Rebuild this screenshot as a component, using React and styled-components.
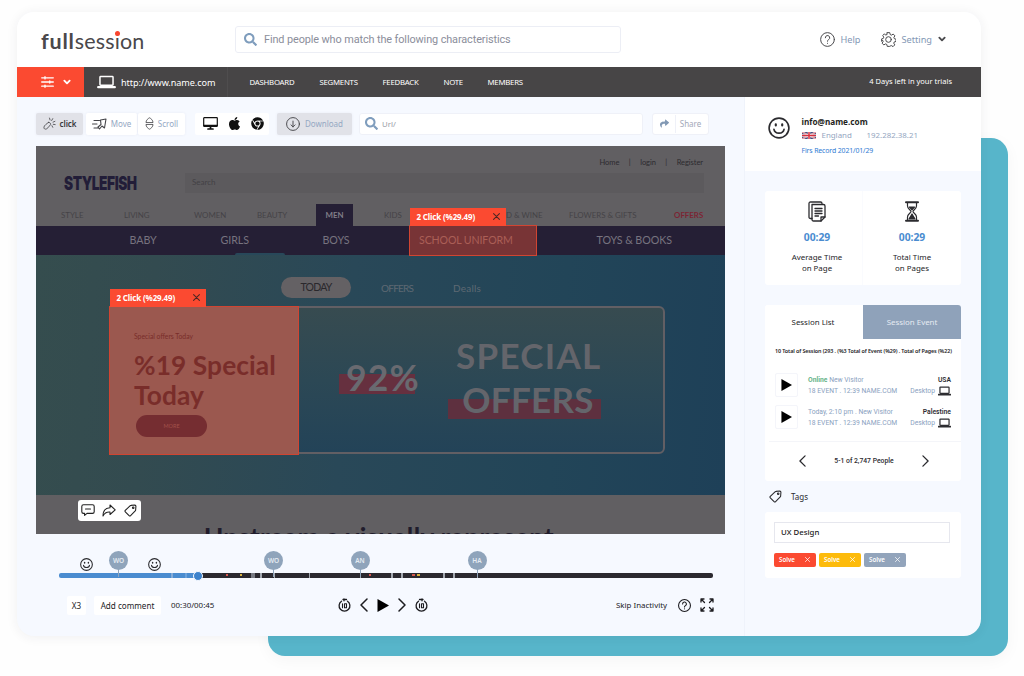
import React from 'react';
import styled, { createGlobalStyle, css } from 'styled-components';
import { FaApple, FaChrome, FaSearch, FaShare } from 'react-icons/fa';

const GlobalStyle = createGlobalStyle`
  * {
    box-sizing: border-box;
  }
  body {
    margin: 0;
    background-color: #fefefe;
    font-family: 'Noto Sans', 'Open Sans', sans-serif;
    color: #2b2b2f;
    overflow: hidden;
  }
  svg {
    display: block;
    flex: none;
  }
`;

const Page = styled.div`
  position: relative;
  width: 1024px;
  height: 676px;
  padding: 12px 0 0 17px;
`;

const Backdrop = styled.div`
  position: absolute;
  left: 268px;
  top: 138px;
  width: 740px;
  height: 518px;
  border-radius: 17px;
  background-color: #57b5ca;
  box-shadow: 0 4px 16px rgba(0, 0, 0, 0.04);
`;

const Window = styled.div`
  position: relative;
  width: 964px;
  height: 624px;
  border-radius: 17px;
  overflow: hidden;
  background-color: #f6f9ff;
  display: flex;
  flex-direction: column;
  box-shadow: 0 1px 12px rgba(40, 40, 60, 0.07);
`;

/* Header */

const Header = styled.header`
  height: 54.5px;
  flex: none;
  display: flex;
  align-items: center;
  background-color: #fff;
  padding: 0 35px 0 24px;
`;

const Logo = styled.div`
  width: 194px;
  height: 30px;
  line-height: 30px;
  padding-top: 2px;
  font-family: Lato, sans-serif;
  font-size: 21.5px;
  font-weight: 400;
  letter-spacing: 0.15px;
  color: #4a484b;
  white-space: nowrap;

  b {
    font-weight: 700;
    letter-spacing: 0.8px;
  }
`;

const LogoI = styled.span`
  position: relative;

  &::after {
    content: '';
    position: absolute;
    left: 0;
    top: 3px;
    width: 5px;
    height: 5px;
    border-radius: 50%;
    background-color: #f9452f;
  }
`;

const PeopleSearch = styled.div`
  width: 386px;
  height: 27px;
  display: flex;
  align-items: center;
  gap: 7px;
  padding-left: 8px;
  border: 1px solid #eceef5;
  border-radius: 3px;
  font-family: Roboto, sans-serif;
  font-size: 10.9px;
  letter-spacing: -0.11px;
  color: #8b8e9b;
  white-space: nowrap;

  svg {
    color: #7f9dbd;
  }
`;

const HeaderActions = styled.div`
  margin-left: auto;
  display: flex;
  align-items: center;
  font-size: 9.2px;
  color: #8398b5;

  svg {
    color: #4a4a4d;
  }
`;

const HeaderLink = styled.span`
  padding-left: 5px;
  padding-right: ${(props) => props.$end || 0}px;
`;

/* Dark bar */

const NavBar = styled.nav`
  height: 30.5px;
  flex: none;
  display: flex;
  align-items: center;
  background-color: #474546;
  color: #fff;
  white-space: nowrap;
`;

const FilterButton = styled.button`
  width: 67px;
  height: 100%;
  border: none;
  padding: 0 0 0 11px;
  display: flex;
  align-items: center;
  justify-content: center;
  gap: 9px;
  background-color: #fb4a31;
  color: #fff;
`;

const SiteUrl = styled.div`
  width: 144px;
  height: 100%;
  display: flex;
  align-items: center;
  gap: 5px;
  padding-left: 13px;
  border-right: 1px solid #4f4d4e;
  font-size: 9.1px;
  letter-spacing: -0.07px;

  span {
    padding-top: 1px;
  }
`;

const NavLinks = styled.div`
  display: grid;
  grid-template-columns: 70px 63px 61px 44px auto;
  padding-left: 21.5px;
  font-size: 7.8px;
  letter-spacing: -0.25px;
`;

const Trial = styled.span`
  margin-left: auto;
  padding-right: 29px;
  padding-bottom: 1px;
  font-size: 7.5px;
`;

const Body = styled.div`
  flex: 1;
  display: flex;
`;

const Main = styled.main`
  width: 727px;
  padding: 15.5px 19px 0;
  display: flex;
  flex-direction: column;
`;

/* Toolbar */

const Toolbar = styled.div`
  height: 22px;
  display: flex;
`;

const Tool = styled.button`
  width: ${(props) => props.$w}px;
  height: 22px;
  margin-right: ${(props) => props.$gap || 0}px;
  border: none;
  border-radius: 2px;
  padding: 0;
  display: flex;
  align-items: center;
  justify-content: center;
  gap: ${(props) => props.$space || 4}px;
  background-color: ${(props) => (props.$active ? '#e1e2e8' : '#fff')};
  color: ${(props) => (props.$strong ? '#38383c' : '#95a8c3')};
  font-family: 'Noto Sans', sans-serif;
  font-size: 8px;
  font-weight: ${(props) => (props.$strong ? 600 : 400)};
  letter-spacing: ${(props) => (props.$strong ? -0.1 : 0)}px;
  box-shadow: 0 0 3px rgba(60, 70, 110, 0.07);

  svg {
    color: #444448;
  }
`;

const Devices = styled.div`
  width: 74px;
  height: 22px;
  margin-right: 8px;
  padding: 0 5px 0 8px;
  display: flex;
  align-items: center;
  justify-content: space-between;
  border-radius: 2px;
  background-color: #fff;
  color: #111;
`;

const UrlSearch = styled.div`
  width: 284px;
  height: 22px;
  margin-right: 9px;
  padding-left: 5px;
  display: flex;
  align-items: center;
  gap: 4px;
  border: 1px solid #eff1f8;
  border-radius: 3px;
  background-color: #fff;
  font-size: 7.8px;
  color: #9a9ca6;

  svg {
    color: #7f9dbd;
  }
`;

const ShareGroup = styled.div`
  width: 57px;
  height: 22px;
  display: grid;
  grid-template-columns: 22px 1fr;
  align-items: center;
  justify-items: center;
  border: 1px solid #eff1f8;
  border-radius: 3px;
  background-color: #fff;
  font-size: 8px;
  color: #a3a8b8;

  svg {
    color: #8299b4;
  }

  span {
    width: 100%;
    line-height: 18px;
    padding-right: 3px;
    text-align: center;
    border-left: 1px solid #eff1f8;
  }
`;

/* Recorded page */

const Preview = styled.section`
  position: relative;
  height: 388.5px;
  margin-top: 11px;
  width: 689px;
  overflow: hidden;
  background-color: #615f62;
  font-family: Lato, sans-serif;
  white-space: nowrap;
`;

const ShopTop = styled.div`
  height: 27px;
  padding: 9px 22px 0 0;
  display: flex;
  justify-content: flex-end;
  gap: 9.5px;
  font-size: 7.5px;
  letter-spacing: -0.05px;
  line-height: 15px;
  color: #2c2a2f;
`;

const ShopBrandRow = styled.div`
  height: 31px;
  display: flex;
  align-items: flex-start;
  padding-left: 28px;
`;

const ShopBrand = styled.div`
  width: 121px;
  height: 22px;
  line-height: 21px;
  font-family: Inter, sans-serif;
  font-size: 19px;
  font-weight: 900;
  letter-spacing: -0.6px;
  color: #221d38;
  transform: scaleX(0.72);
  transform-origin: 0 0;
`;

const ShopSearch = styled.div`
  width: 519px;
  height: 20px;
  padding-left: 7px;
  line-height: 19px;
  font-size: 8px;
  background-color: #5c5a5d;
  color: #434145;
`;

const ShopCategories = styled.div`
  height: 22.5px;
  display: grid;
  grid-template-columns: 63px 70px 63px 59px 68px 105px 80px 105px auto;
  padding-left: 25px;
  font-size: 7.9px;
  line-height: 23px;
  color: #454347;
`;

const Category = styled.span`
  ${(props) =>
    props.$active &&
    css`
      width: 37px;
      text-align: center;
      background-color: #251f35;
      color: #817e88;
      font-weight: 700;
    `}
  ${(props) =>
    props.$sale &&
    css`
      color: #7c2534;
      font-weight: 700;
    `}
`;

const SubNav = styled.div`
  height: 29px;
  display: grid;
  grid-template-columns: 91px 102px 97px 177px auto;
  padding-left: 93.5px;
  font-size: 10.7px;
  letter-spacing: -0.08px;
  line-height: 28px;
  background-color: #251f35;
  color: #77737f;
`;

const SubNavItem = styled.span`
  position: relative;

  ${(props) =>
    props.$open &&
    css`
      &::after {
        content: '';
        position: absolute;
        left: 14px;
        bottom: 0;
        width: 50px;
        height: 2px;
        border-radius: 2px 2px 0 0;
        background-color: #28485a;
      }
    `}
`;

const Hero = styled.div`
  height: 240px;
  padding: 21.5px 60px 0 73px;
  background: linear-gradient(95deg, #354d4e 0%, #334b50 17%, #294858 45%, #224558 75%, #1e4058 100%);
`;

const HeroTabs = styled.div`
  height: 22px;
  display: grid;
  grid-template-columns: 70px 30px 72px auto;
  align-items: center;
  padding-left: 172px;
  font-size: 10px;
  line-height: 20px;
  color: #5e6973;
`;

const HeroTab = styled.span`
  grid-column: ${(props) => props.$col};
  letter-spacing: ${(props) => (props.$tight ? -0.75 : 0.2)}px;
  ${(props) =>
    props.$active &&
    css`
      height: 21px;
      border-radius: 11px;
      text-align: center;
      background-color: #646164;
      color: #2a282c;
      font-size: 10.5px;
    `}
`;

const Promo = styled.div`
  height: 148px;
  margin-top: 7.5px;
  display: flex;
  border: 2px solid #625f64;
  border-radius: 6px;
  background: linear-gradient(#374b50, #2c4855 50%, #234358);
`;

const PromoCard = styled.div`
  width: 188px;
`;

const PromoSpace = styled.div`
  display: flex;
  flex-direction: column;
  align-items: center;
  padding: 26px 0 0 33px;
`;

const Percent = styled.div`
  position: relative;
  width: 76px;
  height: 40px;
  margin: 48px 0 0 40px;
  padding-left: 7px;
  line-height: 43px;
  font-size: 35.5px;
  font-weight: 700;
  letter-spacing: 1.1px;
  color: #696a70;
  background: linear-gradient(#66303f, #66303f) 0 18px / 76px 20px no-repeat;
`;

const OfferLine = styled.div`
  width: 153px;
  height: 43px;
  padding-left: 8px;
  line-height: 43px;
  text-align: center;
  font-family: Lato, sans-serif;
  font-size: 35px;
  font-weight: 700;
  letter-spacing: 1.3px;
  color: #64656b;
  ${(props) =>
    props.$marked &&
    css`
      height: 46px;
      padding-left: 7px;
      line-height: 45px;
      letter-spacing: 0.3px;
      background: linear-gradient(#5e303f, #5e303f) 0 21.5px / 100% 20px no-repeat;
    `}
`;

const Footer = styled.div`
  height: 39px;
  padding: 26px 0 0 168px;
  font-size: 26px;
  line-height: 32px;
  font-weight: 700;
  letter-spacing: 0.32px;
  color: #201c2c;
`;

const Highlight = styled.div`
  position: absolute;
  left: ${(props) => props.$x}px;
  top: ${(props) => props.$y}px;
  width: ${(props) => props.$w}px;
  height: ${(props) => props.$h}px;
  border: 1px solid #d04532;
  background-color: ${(props) => props.$fill};
`;

const ClickTag = styled.div`
  position: absolute;
  left: ${(props) => props.$x}px;
  top: ${(props) => props.$y}px;
  width: 96.5px;
  height: 18px;
  padding: 0 6px 1px 7px;
  display: flex;
  align-items: center;
  justify-content: space-between;
  background-color: #fb4a31;
  color: #fff;
  font-family: 'Noto Sans', sans-serif;
  font-size: 8px;
  font-weight: 700;
  letter-spacing: -0.15px;

  svg {
    color: #4b2724;
  }
`;

const HighlightText = styled.div`
  padding: 23px 0 0 24px;
  color: #792d2a;
`;

const SmallOffer = styled.div`
  height: 13px;
  line-height: 13px;
  font-size: 6.8px;
`;

const BigOffer = styled.div`
  margin-top: 7px;
  font-family: Lato, sans-serif;
  font-size: 26.3px;
  line-height: 30.5px;
  font-weight: 700;
  letter-spacing: 0.1px;
`;

const MoreButton = styled.div`
  width: 71px;
  height: 22px;
  margin: 4.5px 0 0 2px;
  border-radius: 11px;
  text-align: center;
  line-height: 22px;
  font-size: 5.5px;
  background-color: #752d31;
  color: #a2514a;
`;

const SchoolText = styled.div`
  padding-left: 9px;
  line-height: 28px;
  font-size: 10.6px;
  letter-spacing: -0.12px;
  color: #ab5f56;
`;

const FloatTools = styled.div`
  position: absolute;
  left: 41.5px;
  top: 354px;
  width: 63px;
  height: 21px;
  border-radius: 3px;
  background-color: #fff;
  color: #222;
  display: grid;
  grid-template-columns: repeat(3, 1fr);
  align-items: center;
  justify-items: center;
`;

/* Timeline */

const Timeline = styled.div`
  position: relative;
  width: 654px;
  height: 5px;
  margin: 39px 0 0 23px;
  border-radius: 2px;
  background: linear-gradient(90deg, #4a8cd0 139px, #2b292f 139px);
  flex: none;
`;

const Knob = styled.div`
  position: absolute;
  left: 134px;
  top: -2.5px;
  width: 10px;
  height: 10px;
  border-radius: 50%;
  border: 1px solid #f6f9ff;
  background-color: #3c82cc;
`;

const Tick = styled.i`
  position: absolute;
  left: ${(props) => props.$x}px;
  top: ${(props) => (props.$dot ? 1 : 0)}px;
  width: ${(props) => props.$w || 1.5}px;
  height: ${(props) => (props.$dot ? 2 : 5)}px;
  background-color: ${(props) => props.$color || '#a3a8b0'};
`;

const Visitor = styled.div`
  position: absolute;
  left: ${(props) => props.$x}px;
  top: -22px;
  width: 19px;
  height: 19px;
  border-radius: 50%;
  background-color: #8fa4bb;
  color: #e5ebf2;
  font-size: 6.5px;
  font-weight: 600;
  line-height: 19px;
  text-align: center;

  &::after {
    content: '';
    position: absolute;
    left: 9px;
    top: 18px;
    width: 1px;
    height: 8px;
    background-color: #8fa4bb;
  }
`;

const Mood = styled.div`
  position: absolute;
  left: ${(props) => props.$x}px;
  top: -15.5px;
`;

const Controls = styled.div`
  height: 20px;
  margin-top: 17px;
  padding-left: 31px;
  display: grid;
  grid-template-columns: 27px 77px 167px 22px 17px 21px 17px 201px 61.5px 22px auto;
  align-items: center;
  font-size: 7.9px;
  color: #222226;
  white-space: nowrap;

  svg {
    color: #1c1c20;
  }
`;

const SmallButton = styled.button`
  width: ${(props) => props.$w}px;
  height: 19px;
  border: none;
  padding: 0;
  border-radius: 2px;
  background-color: #fff;
  font: inherit;
  font-size: 8.1px;
  color: inherit;
`;

/* Sidebar */

const Sidebar = styled.aside`
  width: 237px;
  border-left: 1px solid #eff3fb;
`;

const Profile = styled.div`
  height: 74px;
  padding: 19px 0 0 23px;
  display: flex;
  gap: 11.5px;
  background-color: #fff;

  > svg {
    margin-top: 1px;
  }
`;

const ProfileInfo = styled.div`
  font-size: 7.9px;
  white-space: nowrap;
`;

const Email = styled.div`
  height: 12px;
  line-height: 11px;
  font-size: 8.2px;
  font-weight: 700;
  color: #1f1f22;
`;

const Place = styled.div`
  height: 15px;
  line-height: 15px;
  display: grid;
  grid-template-columns: 20px 45px auto;
  align-items: center;
  color: #94a6bf;
`;

const Record = styled.div`
  height: 15px;
  line-height: 15px;
  font-size: 6.9px;
  letter-spacing: -0.12px;
  color: #2f7bd3;
`;

const Card = styled.div`
  width: 196px;
  height: ${(props) => props.$h}px;
  margin: ${(props) => props.$top}px 0 0 20px;
  border-radius: 3px;
  background-color: #fff;
  overflow: hidden;
`;

const Stats = styled(Card)`
  display: grid;
  grid-template-columns: 98px 98px;
`;

const Stat = styled.div`
  display: flex;
  flex-direction: column;
  align-items: center;
  padding-top: 9.5px;
  padding-left: ${(props) => (props.$first ? 7 : 0)}px;
  border-right: ${(props) => (props.$first ? '1px solid #fafbfe' : 'none')};
`;

const StatTime = styled.div`
  margin-top: 9.5px;
  line-height: 13px;
  font-size: 10.3px;
  font-weight: 700;
  color: #4a8cd0;
`;

const StatLabel = styled.div`
  margin-top: 7.5px;
  text-align: center;
  font-size: 7.9px;
  line-height: 11.5px;
  color: #252528;
`;

const Tabs = styled.div`
  display: grid;
  grid-template-columns: 98px 98px;
  height: 33px;
`;

const Tab = styled.div`
  line-height: 34px;
  text-align: center;
  padding-right: ${(props) => (props.$inactive ? 0 : 2)}px;
  font-size: 7.9px;
  color: ${(props) => (props.$inactive ? '#e6ebf2' : '#252528')};
  background-color: ${(props) => (props.$inactive ? '#8fa2ba' : '#fff')};
`;

const Summary = styled.div`
  height: 26px;
  padding-left: 10px;
  line-height: 26px;
  font-size: 5.4px;
  font-weight: 600;
  letter-spacing: -0.1px;
  color: #232326;
  white-space: nowrap;
`;

const Session = styled.div`
  height: 32px;
  padding: 0 10px;
  display: grid;
  grid-template-columns: 33px 1fr auto;
  font-family: Roboto, sans-serif;
  font-size: 6.75px;
  line-height: 11px;
  color: #8aa1c0;
  white-space: nowrap;
`;

const PlayBox = styled.div`
  width: 23px;
  height: 24px;
  margin-top: 9px;
  display: flex;
  align-items: center;
  justify-content: center;
  border: 1px solid #f4f5fa;
  border-radius: 2px;
`;

const SessionText = styled.div`
  padding-top: 10.5px;
`;

const Online = styled.b`
  color: #69b48a;
`;

const SessionPlace = styled.div`
  padding-top: 10.5px;
  text-align: right;
`;

const Country = styled.div`
  color: #2e2e32;
  font-weight: 600;
`;

const DeviceLine = styled.div`
  display: flex;
  align-items: center;
  justify-content: flex-end;
  gap: 3px;

  svg {
    color: #2e2e32;
  }
`;

const Pager = styled.div`
  height: 40px;
  margin: 13px 0 0 4px;
  padding: 0 32px 2px 30px;
  display: flex;
  align-items: center;
  justify-content: space-between;
  border-top: 1px solid #f4f5f9;
  font-family: Roboto, sans-serif;
  font-size: 6.8px;
  font-weight: 500;
`;

const TagsTitle = styled.div`
  height: 31px;
  padding: 0 0 1px 24px;
  display: flex;
  align-items: center;
  gap: 9px;
  font-size: 8px;
`;

const TagInput = styled.div`
  width: 176px;
  height: 21px;
  margin: 10px 0 10px 9px;
  padding-left: 6px;
  border: 1px solid #e6e7ee;
  line-height: 19px;
  font-size: 7.8px;
  font-weight: 500;
  color: #222;
`;

const Chips = styled.div`
  display: flex;
  gap: 3px;
  padding-left: 9px;
`;

const Chip = styled.div`
  width: 42px;
  height: 13.5px;
  padding: 0 6px 0 5px;
  display: flex;
  align-items: center;
  justify-content: space-between;
  border-radius: 2px;
  background-color: ${(props) => props.$color};
  color: #fff;
  font-size: 6.2px;
  font-weight: 600;
`;

// Stroked icon wrapper, every drawing is on its own grid
function Icon({ w = 16, h = w, box = '0 0 24 24', stroke = 2, children }) {
  return (
    <svg
      width={w}
      height={h}
      viewBox={box}
      fill="none"
      stroke="currentColor"
      strokeWidth={stroke}
      strokeLinecap="round"
      strokeLinejoin="round"
    >
      {children}
    </svg>
  );
}

const Close = ({ size = 7, stroke = 3.6 }) => (
  <Icon w={size} stroke={stroke}>
    <path d="M2 2l20 20M22 2L2 22" />
  </Icon>
);

const HelpIcon = ({ size, stroke = 1.6 }) => (
  <Icon w={size} stroke={stroke}>
    <circle cx="12" cy="12" r="11" />
    <path d="M8.5 9.2a3.5 3.5 0 1 1 5.2 3c-1.2.7-1.7 1.3-1.7 2.6" />
    <path d="M12 18v.2" />
  </Icon>
);

const Gear = () => (
  <Icon w={15} stroke={1.6}>
    <circle cx="12" cy="12" r="4.5" />
    <path d="M10 1h4l.7 3.1 2 .9 2.8-1.7 2.7 2.8-1.6 2.7.8 2 2.6.7v3.6l-2.8.8-.8 2 1.6 2.7-2.7 2.8-2.8-1.7-2 .9L14 23h-4l-.7-3.1-2-.9-2.8 1.7-2.7-2.8 1.6-2.7-.8-2L1 15v-4l2.6-.7.8-2-1.6-2.7 2.7-2.8L7.3 5l2-.9z" />
  </Icon>
);

const Chevron = ({ w = 8, h = 6, stroke = 2.8 }) => (
  <Icon w={w} h={h} box="0 0 12 8" stroke={stroke}>
    <path d="M2 2l4 4 4-4" />
  </Icon>
);

const Side = ({ right, w = 7, h = 12 }) => (
  <Icon w={w} h={h} box="0 0 8 14" stroke={1.5}>
    <path d={right ? 'M1 1l6 6-6 6' : 'M7 1L1 7l6 6'} />
  </Icon>
);

const Laptop = ({ w, h, stroke = 1.6 }) => (
  <Icon w={w} h={h} box="0 0 20 15" stroke={stroke}>
    <rect x="3" y="1.5" width="14" height="9.5" rx="0.8" />
    <path d="M1 13h18" strokeWidth={stroke * 1.4} />
  </Icon>
);

const Play = ({ w, h }) => (
  <svg width={w} height={h} viewBox="0 0 12 13">
    <path d="M.5 0L12 6.5.5 13z" fill="#000" />
  </svg>
);

const Smiley = ({ size, stroke = 1.8 }) => (
  <Icon w={size} stroke={stroke}>
    <circle cx="12" cy="12" r="10.8" />
    <path d="M6.5 13.5c1 5.5 10 5.5 11 0" />
    <path d="M8.5 8v1.2M15.5 8v1.2" strokeWidth={stroke * 1.3} />
  </Icon>
);

const TagIcon = ({ size }) => (
  <Icon w={size} stroke={2}>
    <path d="M13 2.5l7-.5c1.2 0 2 .8 2 2l-.5 7c0 .8-.3 1.3-.8 1.8l-8.5 8.7c-.8.8-2 .8-2.8 0l-7-7c-.8-.8-.8-2 0-2.8l8.7-8.4c.5-.5 1.1-.8 1.9-.8z" />
    <circle cx="17" cy="7" r="1.4" />
  </Icon>
);

const Sliders = () => (
  <Icon w={13} h={12} box="0 0 13 12" stroke={1.3}>
    <path d="M.7 1.8h11.6M.7 6h11.6M.7 10.2h11.6M4 .7v2.2M8.8 4.9v2.2M4 9.1v2.2" />
  </Icon>
);

// Chain link with click sparks
const ClickIcon = () => (
  <Icon w={13} stroke={1.5}>
    <path d="M10 10l-5 4c-4 3-4 7-2 8s4 0 6-2l5-6c1-2-2-5-4-4z" />
    <path d="M12 2l1 3.5M18 3l-2 3.5M22 8l-3.5 1.5M22.500 14l-3.500-.5M18 19l-1.500-3" />
  </Icon>
);

const MoveIcon = () => (
  <Icon w={15} h={12} box="0 0 30 24" stroke={2.2}>
    <path d="M4 5h11M1 12h9M4 20h9M17 4l11-2-3 18-5-4-5 6-3-4 6-5z" />
  </Icon>
);

const ScrollIcon = () => (
  <Icon w={9} h={13} box="0 0 16 24" stroke={1.5}>
    <path d="M1.5 9.500c0-3.500 4-7 6.500-8 2.500 1 6.500 4.500 6.500 8zM1.500 14.500c0 3.500 4 7 6.500 8 2.500-1 6.500-4.500 6.500-8z" />
  </Icon>
);

const MonitorIcon = () => (
  <Icon w={15} h={13} box="0 0 15 13" stroke={1.2}>
    <rect x="0.7" y="0.7" width="13.6" height="8.6" rx="0.5" />
    <path d="M1 8.6h13M5 12h5M7.5 9.5V12" strokeWidth="1.7" />
  </Icon>
);

const DownloadIcon = () => (
  <Icon w={14} stroke={1.6}>
    <circle cx="12" cy="12" r="11" />
    <path d="M12 7v10M8.5 13.5L12 17l3.5-3.5" />
  </Icon>
);

const Pages = () => (
  <Icon w={18} h={21} box="0 0 18 21" stroke={1.3}>
    <path d="M4 3.5h11.5c.8 0 1.5.6 1.5 1.5v11l-4 4H5.5C4.6 20 4 19.4 4 18.5z" />
    <path d="M4 17.5H2.500C1.600 17.500 1 17 1 16V2.500C1 1.600 1.600 1 2.500 1h10c.9 0 1.500.6 1.500 1.500M17 16h-4v4" />
    <path d="M7 7.5h7M7 10h7M7 12.5h7M7 15h3.5" />
  </Icon>
);

const Hourglass = () => (
  <Icon w={14} h={21} box="0 0 14 21" stroke={1.2}>
    <path d="M1 1.2h12M1 19.8h12" strokeWidth="2" />
    <path d="M2.5 2v3c0 3 3.5 4 3.5 5.5S2.5 13 2.5 16v3M11.5 2v3c0 3-3.5 4-3.5 5.5s3.5 2.500 3.500 5.500v3" />
    <path d="M4.5 6h5L7 8.8zM7 13l3 5H4z" fill="currentColor" />
  </Icon>
);

const Flag = () => (
  <svg width="14" height="7" viewBox="0 0 28 14">
    <rect width="28" height="14" fill="#45507f" />
    <path d="M0 0l28 14M28 0L0 14" stroke="#fff" strokeWidth="3" />
    <path d="M0 0l28 14M28 0L0 14" stroke="#d33845" strokeWidth="1.3" />
    <path d="M14 0v14M0 7h28" stroke="#fff" strokeWidth="5" />
    <path d="M14 0v14M0 7h28" stroke="#d8303e" strokeWidth="3" />
  </svg>
);

const Comment = () => (
  <Icon w={14} h={12} box="0 0 14 12" stroke={1.1}>
    <path d="M2.5.8h9c.9 0 1.7.7 1.7 1.7v5.2c0 1-.8 1.7-1.7 1.7H6l-2.4 2V9.4H2.5c-1 0-1.7-.7-1.7-1.7V2.5C.8 1.5 1.5.8 2.500.8zM4.500 5h5" />
  </Icon>
);

const Forward = () => (
  <Icon w={14} h={13} box="0 0 14 13" stroke={1.1}>
    <path d="M8 1l5.2 4.8L8 10.5V8C4.5 7.7 2.5 9 1 12 1 7 3.5 4 8 3.8z" />
  </Icon>
);

const Skip = ({ flip }) => (
  <Icon w={13} h={14} box="0 0 13 14" stroke={1.3}>
    <path d={flip ? 'M3.5 3.2a5.4 5.4 0 1 0 6 0M4.5 1.5h3.5M7 .8v2' : 'M9.5 3.2a5.4 5.4 0 1 1-6 0M5 1.5h3.5M6 .8v2'} />
    <path d="M4.5 5.8v4M6.5 5.8h2v4h-2z" strokeWidth="1.1" />
  </Icon>
);

const Expand = () => (
  <Icon w={14} h={14} box="0 0 14 14" stroke={1.3}>
    <path d="M1 4V1h3M1.3 1.3L4.5 4.5M10 1h3v3M12.7 1.3L9.5 4.5M1 10v3h3M1.3 12.7l3.2-3.2M13 10v3h-3M12.700 12.700L9.500 9.500" />
  </Icon>
);

const navLinks = ['DASHBOARD', 'SEGMENTS', 'FEEDBACK', 'NOTE', 'MEMBERS'];

const visitors = [
  { name: 'WO', x: 50 },
  { name: 'WO', x: 205 },
  { name: 'AN', x: 291.5 },
  { name: 'HA', x: 408.5 },
];

const ticks = [
  { x: 112, color: '#83abd8' },
  { x: 126, color: '#6ba1da' },
  { x: 167, w: 2, color: '#d4574f', dot: true },
  { x: 181, w: 2, color: '#d9b23e', dot: true },
  { x: 192, w: 4, color: '#777a82' },
  { x: 201 },
  { x: 214.5 },
  { x: 249.5 },
  { x: 300.5 },
  { x: 310, w: 2, color: '#d4574f', dot: true },
  { x: 332 },
  { x: 342 },
  { x: 353, w: 3, color: '#d4574f', dot: true },
  { x: 358, w: 3, color: '#d9b23e', dot: true },
  { x: 384 },
  { x: 394 },
  { x: 417.5 },
];

const tags = ['#fb4a31', '#fdbb0b', '#92a4bb'];

function RecordedPage() {
  return (
    <Preview>
      <ShopTop>
        <span>Home</span>
        <span>|</span>
        <span>login</span>
        <span>|</span>
        <span>Register</span>
      </ShopTop>
      <ShopBrandRow>
        <ShopBrand>STYLEFISH</ShopBrand>
        <ShopSearch>Search</ShopSearch>
      </ShopBrandRow>
      <ShopCategories>
        <Category>STYLE</Category>
        <Category>LIVING</Category>
        <Category>WOMEN</Category>
        <Category>BEAUTY</Category>
        <Category $active>MEN</Category>
        <Category>KIDS</Category>
        <Category>FOOD &amp; WINE</Category>
        <Category>FLOWERS &amp; GIFTS</Category>
        <Category $sale>OFFERS</Category>
      </ShopCategories>
      <SubNav>
        <SubNavItem>BABY</SubNavItem>
        <SubNavItem $open>GIRLS</SubNavItem>
        <SubNavItem>BOYS</SubNavItem>
        <SubNavItem />
        <SubNavItem>TOYS &amp; BOOKS</SubNavItem>
      </SubNav>
      <Hero>
        <HeroTabs>
          <HeroTab $active $tight $col={1}>TODAY</HeroTab>
          <HeroTab $tight $col={3}>OFFERS</HeroTab>
          <HeroTab $col={4}>Dealls</HeroTab>
        </HeroTabs>
        <Promo>
          <PromoCard />
          <Percent>92%</Percent>
          <PromoSpace>
            <OfferLine>SPECIAL</OfferLine>
            <OfferLine $marked>OFFERS</OfferLine>
          </PromoSpace>
        </Promo>
      </Hero>
      <Footer>Upstream a visually represent</Footer>

      <Highlight $x={373} $y={79.5} $w={128} $h={31} $fill="#783436">
        <SchoolText>SCHOOL UNIFORM</SchoolText>
      </Highlight>
      <ClickTag $x={373.5} $y={62.5}>
        2 Click (%29.49)
        <Close />
      </ClickTag>
      <Highlight $x={73} $y={160} $w={190} $h={149.5} $fill="#9b584f">
        <HighlightText>
          <SmallOffer>Special offers Today</SmallOffer>
          <BigOffer>
            %19 Special
            <br />
            Today
          </BigOffer>
          <MoreButton>MORE</MoreButton>
        </HighlightText>
      </Highlight>
      <ClickTag $x={73.5} $y={143}>
        2 Click (%29.49)
        <Close />
      </ClickTag>
      <FloatTools>
        <Comment />
        <Forward />
        <TagIcon size={13} />
      </FloatTools>
    </Preview>
  );
}

function Player() {
  return (
    <>
      <Timeline>
        {ticks.map((t) => (
          <Tick key={t.x} $x={t.x} $w={t.w} $color={t.color} $dot={t.dot} />
        ))}
        {visitors.map((v) => (
          <Visitor key={v.x} $x={v.x}>{v.name}</Visitor>
        ))}
        <Mood $x={21}><Smiley size={13} stroke={2} /></Mood>
        <Mood $x={88.5}><Smiley size={13} stroke={2} /></Mood>
        <Knob />
      </Timeline>
      <Controls>
        <SmallButton $w={19}>X3</SmallButton>
        <SmallButton $w={67}>Add comment</SmallButton>
        <span>00:30/00:45</span>
        <Skip />
        <Side w={8} h={14} />
        <Play w={12} h={13} />
        <Side right w={8} h={14} />
        <Skip flip />
        <span>Skip Inactivity</span>
        <HelpIcon size={13} stroke={2} />
        <Expand />
      </Controls>
    </>
  );
}

function SessionRow({ status, visitor, country }) {
  return (
    <Session>
      <PlayBox>
        <Play w={11} h={12} />
      </PlayBox>
      <SessionText>
        <div>
          {status === 'Online' ? <Online>Online</Online> : status} {visitor}
        </div>
        <div>18 EVENT . 12:39 NAME.COM</div>
      </SessionText>
      <SessionPlace>
        <Country>{country}</Country>
        <DeviceLine>
          Desktop <Laptop w={13} h={10} stroke={1.9} />
        </DeviceLine>
      </SessionPlace>
    </Session>
  );
}

function App() {
  return (
    <Page>
      <GlobalStyle />
      <Backdrop />
      <Window>
        <Header>
          <Logo>
            <b>full</b>sess<LogoI>i</LogoI>on
          </Logo>
          <PeopleSearch>
            <FaSearch size={13} />
            Find people who match the following characteristics
          </PeopleSearch>
          <HeaderActions>
            <HelpIcon size={15} />
            <HeaderLink $end={21}>Help</HeaderLink>
            <Gear />
            <HeaderLink $end={6}>Setting</HeaderLink>
            <Chevron />
          </HeaderActions>
        </Header>
        <NavBar>
          <FilterButton>
            <Sliders />
            <Chevron />
          </FilterButton>
          <SiteUrl>
            <Laptop w={19} h={14} />
            <span>http://www.name.com</span>
          </SiteUrl>
          <NavLinks>
            {navLinks.map((link) => (
              <span key={link}>{link}</span>
            ))}
          </NavLinks>
          <Trial>4 Days left in your trials</Trial>
        </NavBar>
        <Body>
          <Main>
            <Toolbar>
              <Tool $w={47} $gap={3} $active $strong>
                <ClickIcon /> click
              </Tool>
              <Tool $w={51} $gap={1}>
                <MoveIcon /> Move
              </Tool>
              <Tool $w={47} $gap={10}>
                <ScrollIcon /> Scroll
              </Tool>
              <Devices>
                <MonitorIcon />
                <FaApple size={15} />
                <FaChrome size={13} />
              </Devices>
              <Tool $w={75} $gap={7} $space={5} $active>
                <DownloadIcon /> Download
              </Tool>
              <UrlSearch>
                <FaSearch size={13} /> Url/
              </UrlSearch>
              <ShareGroup>
                <FaShare size={9} />
                <span>Share</span>
              </ShareGroup>
            </Toolbar>
            <RecordedPage />
            <Player />
          </Main>
          <Sidebar>
            <Profile>
              <Smiley size={22} />
              <ProfileInfo>
                <Email>info@name.com</Email>
                <Place>
                  <Flag />
                  <span>England</span>
                  <span>192.282.38.21</span>
                </Place>
                <Record>Firs Record 2021/01/29</Record>
              </ProfileInfo>
            </Profile>
            <Stats $h={94} $top={20}>
              <Stat $first>
                <Pages />
                <StatTime>00:29</StatTime>
                <StatLabel>
                  Average Time
                  <br />
                  on Page
                </StatLabel>
              </Stat>
              <Stat>
                <Hourglass />
                <StatTime>00:29</StatTime>
                <StatLabel>
                  Total Time
                  <br />
                  on Pages
                </StatLabel>
              </Stat>
            </Stats>
            <Card $h={176} $top={20}>
              <Tabs>
                <Tab>Session List</Tab>
                <Tab $inactive>Session Event</Tab>
              </Tabs>
              <Summary>
                10 Total of Session (293 . (%3 Total of Event (%29) . Total of Pages (%22)
              </Summary>
              <SessionRow status="Online" visitor="New Visitor" country="USA" />
              <SessionRow status="Today, 2:10 pm ." visitor="New Visitor" country="Palestine" />
              <Pager>
                <Side w={7} h={12} />
                5-1 of 2,747 People
                <Side right w={7} h={12} />
              </Pager>
            </Card>
            <TagsTitle>
              <TagIcon size={13} />
              Tags
            </TagsTitle>
            <Card $h={66} $top={0}>
              <TagInput>UX Design</TagInput>
              <Chips>
                {tags.map((color) => (
                  <Chip key={color} $color={color}>
                    Solve
                    <Close size={5} stroke={3.5} />
                  </Chip>
                ))}
              </Chips>
            </Card>
          </Sidebar>
        </Body>
      </Window>
    </Page>
  );
}

export default App;
